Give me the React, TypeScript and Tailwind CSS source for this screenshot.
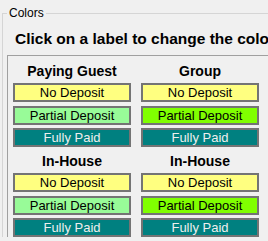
import React from 'react';

type Cell = { label: string; bg: string; text: string };

const leftCells: Cell[] = [
  { label: 'No Deposit', bg: 'bg-[#ffff80]', text: 'text-black' },
  { label: 'Partial Deposit', bg: 'bg-[#98fb98]', text: 'text-black' },
  { label: 'Fully Paid', bg: 'bg-[#008080]', text: 'text-[#eeeeee]' },
];

const rightCells: Cell[] = [
  { label: 'No Deposit', bg: 'bg-[#ffff80]', text: 'text-black' },
  { label: 'Partial Deposit', bg: 'bg-[#80ff00]', text: 'text-black' },
  { label: 'Fully Paid', bg: 'bg-[#008080]', text: 'text-[#eeeeee]' },
];

const ColorGroup = ({ title, cells }: { title: string; cells: Cell[] }) => (
  <div className="flex flex-col">
    <div className="h-[26px] pt-[6px] text-center text-[14px] font-bold leading-[16px] text-black">
      {title}
    </div>
    {cells.map((cell, index) => (
      <button
        key={`${title}-${cell.label}`}
        className={`flex h-[19px] w-[118px] items-center justify-center border-2 border-[#747474] text-[13px] leading-[15px] ${cell.bg} ${cell.text} ${
          index === 1 ? 'mt-[4px]' : index === 2 ? 'mt-[3px]' : ''
        }`}
      >
        {cell.label}
      </button>
    ))}
  </div>
);

const App = () => {
  return (
    <div className="h-[241px] w-[268px] overflow-hidden bg-[#f0f0f0] pt-[6px] font-['Liberation_Sans',Arial,sans-serif]">
      <fieldset className="ml-[2px] w-[320px] border-l border-t border-[#d5d5d5]">
        <legend className="ml-[4px] px-[2px] text-[12px] leading-[14px] text-black">
          Colors
        </legend>
        <div className="ml-[12px] mt-[10px] whitespace-nowrap text-[15.5px] font-bold leading-[17px] text-black">
          Click on a label to change the color
        </div>
        <div className="ml-[4px] mt-[8px] border-l border-t border-[#a0a0a0] pl-[5px] pt-[1px]">
          <div className="grid w-fit grid-cols-[118px_118px] gap-x-[10px]">
            <ColorGroup title="Paying Guest" cells={leftCells} />
            <ColorGroup title="Group" cells={rightCells} />
            <ColorGroup title="In-House" cells={leftCells} />
            <ColorGroup title="In-House" cells={rightCells} />
          </div>
        </div>
      </fieldset>
    </div>
  );
};

export default App;
